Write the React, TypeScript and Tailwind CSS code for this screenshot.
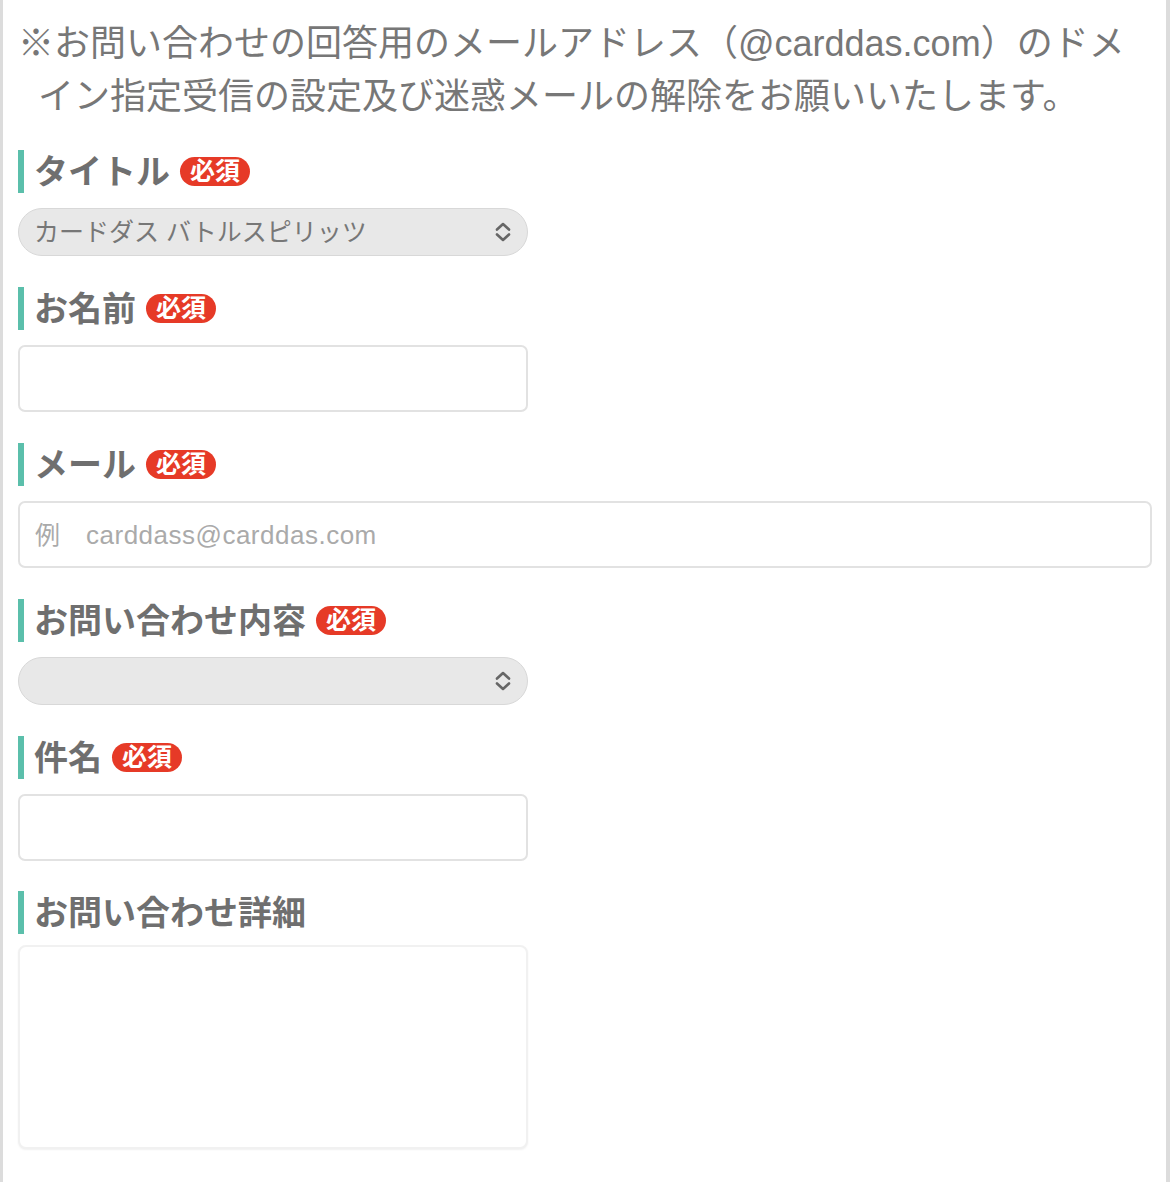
import React from "react";

const font = { fontFamily: '"Liberation Sans", "Noto Sans CJK JP", sans-serif' };

function Badge() {
  return (
    <span className="ml-[10px] inline-flex h-[29px] items-center rounded-full bg-[#e63a27] px-[10px] text-[25px] font-bold leading-none text-white">
      必須
    </span>
  );
}

function Label({ text, required }: { text: string; required?: boolean }) {
  return (
    <div className="flex h-[43px] items-center border-l-[6px] border-[#5bbfab] pl-[10px]">
      <span className="text-[34px] font-bold leading-none text-[#6f6f6f]">{text}</span>
      {required && <Badge />}
    </div>
  );
}

function Chevron() {
  return (
    <svg width="20" height="24" viewBox="0 0 20 24" fill="none" stroke="#666" strokeWidth="2.6" strokeLinecap="round" strokeLinejoin="round">
      <path d="M4 9.5 L10 4 L16 9.5" />
      <path d="M4 14.5 L10 20 L16 14.5" />
    </svg>
  );
}

function Select({ value }: { value?: string }) {
  return (
    <div className="mt-[15px] flex h-[48px] w-[510px] items-center justify-between rounded-full border border-[#d8d8d8] bg-[#e8e8e8] pl-[15px] pr-[14px]">
      <span className="text-[25px] leading-none text-[#777]">{value ?? ""}</span>
      <Chevron />
    </div>
  );
}

function Input({ wide, placeholder }: { wide?: boolean; placeholder?: React.ReactNode }) {
  return (
    <div
      className={`mt-[15px] flex h-[67px] items-center rounded-[7px] border-2 border-[#e2e2e2] bg-white pl-[15px] ${wide ? "w-[1134px]" : "w-[510px]"}`}
    >
      {placeholder}
    </div>
  );
}

export default function App() {
  return (
    <div style={font} className="flex min-h-[1182px] w-[1170px] border-l-[3px] border-r-[4px] border-[#dcdcdc] bg-white">
      <div className="flex flex-1 flex-col pl-[15px] pt-[17px]">
        <p className="whitespace-nowrap text-[36px] leading-[53px] text-[#777]">
          ※お問い合わせの回答用のメールアドレス（@carddas.com）のドメ
          <br />
          <span className="pl-[20px]">イン指定受信の設定及び迷惑メールの解除をお願いいたします。</span>
        </p>

        <div className="mt-[27px]">
          <Label text="タイトル" required />
          <Select value="カードダス バトルスピリッツ" />
        </div>

        <div className="mt-[31px]">
          <Label text="お名前" required />
          <Input />
        </div>

        <div className="mt-[31px]">
          <Label text="メール" required />
          <Input
            wide
            placeholder={
              <span className="text-[25px] leading-none text-[#aaa]">
                例<span className="ml-[26px] text-[26px] tracking-[0.5px]">carddass@carddas.com</span>
              </span>
            }
          />
        </div>

        <div className="mt-[31px]">
          <Label text="お問い合わせ内容" required />
          <Select />
        </div>

        <div className="mt-[31px]">
          <Label text="件名" required />
          <Input />
        </div>

        <div className="mt-[30px]">
          <Label text="お問い合わせ詳細" />
          <div className="mt-[11px] h-[204px] w-[510px] rounded-[8px] border-2 border-[#f1f1f1] bg-white shadow-[0_1px_2px_rgba(0,0,0,0.06)]" />
        </div>
      </div>
    </div>
  );
}
